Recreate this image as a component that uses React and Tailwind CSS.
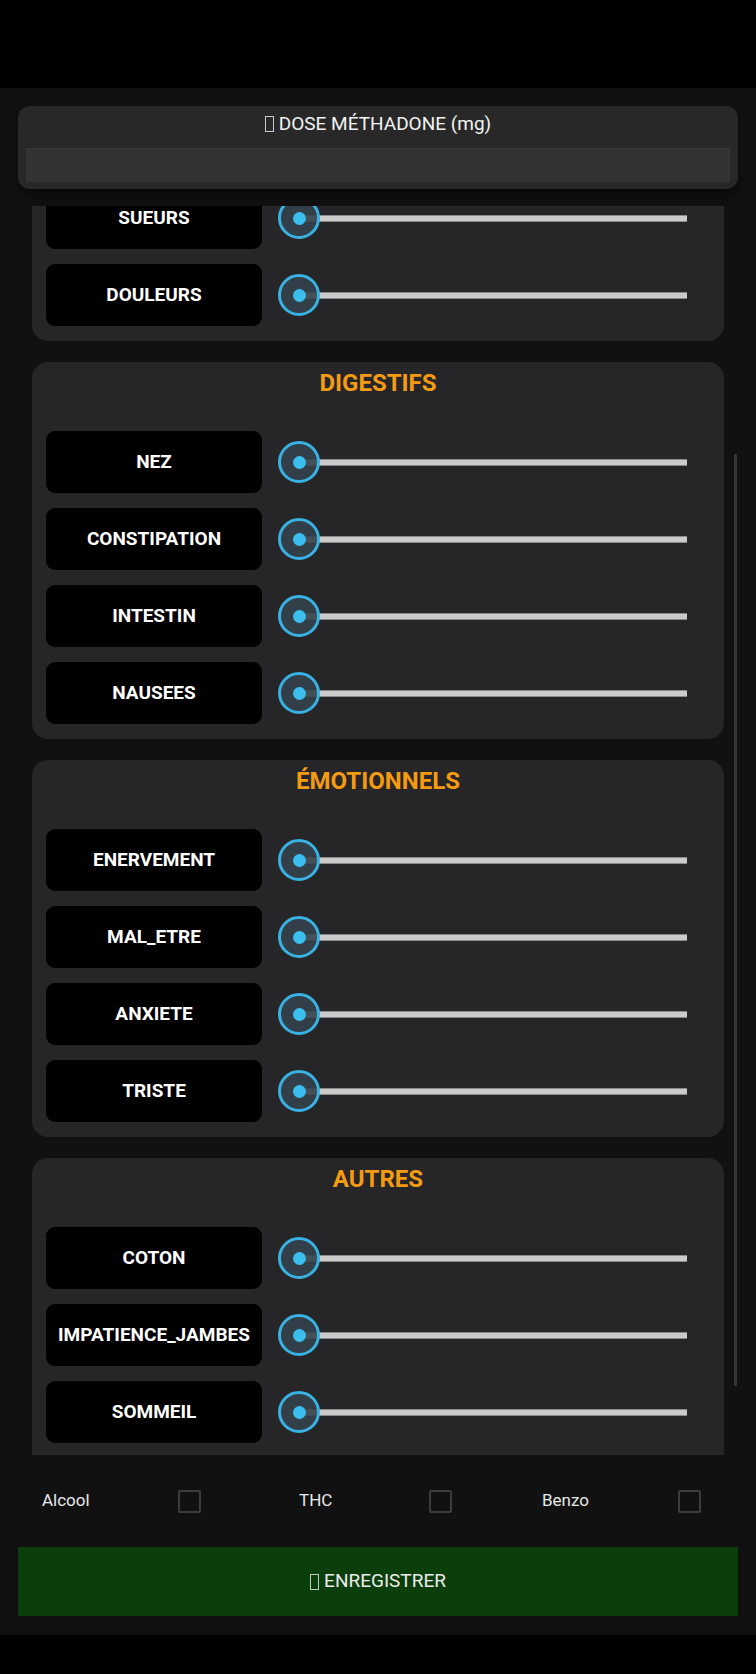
import React from 'react';

// symptom groups (first one is scrolled partly out of view)
const groups = [
  { title: 'PHYSIQUES', items: ['BAILLEMENTS', 'FRISSONS', 'SUEURS', 'DOULEURS'] },
  { title: 'DIGESTIFS', items: ['NEZ', 'CONSTIPATION', 'INTESTIN', 'NAUSEES'] },
  { title: 'ÉMOTIONNELS', items: ['ENERVEMENT', 'MAL_ETRE', 'ANXIETE', 'TRISTE'] },
  { title: 'AUTRES', items: ['COTON', 'IMPATIENCE_JAMBES', 'SOMMEIL'], last: true },
];

const Tofu = () => (
  <span className="inline-block w-[9px] h-[16px] border border-current mr-[5px] align-[-2px] opacity-80"></span>
);

const Slider = () => (
  <div className="relative flex-1 h-[44px] ml-[16px] mr-[23px]">
    <div className="absolute left-[21px] right-0 top-[19px] h-[7px] bg-[#cbcbcb] border-y border-[#8a8a8a]"></div>
    <div className="absolute left-0 top-[1px] w-[42px] h-[42px] rounded-full border-[3px] border-[#38b2e3] bg-[#34434b]/90 flex items-center justify-center">
      <div className="w-[13px] h-[13px] rounded-full bg-[#3bbdee]"></div>
    </div>
  </div>
);

const Row = ({ label }) => (
  <div className="flex items-center h-[62px]">
    <div className="w-[216px] h-[62px] shrink-0 bg-black rounded-[9px] flex items-center justify-center text-white font-bold text-[19px] whitespace-nowrap">
      {label}
    </div>
    <Slider />
  </div>
);

const Group = ({ title, items, last }) => (
  <div className={`bg-[#262628] rounded-[16px] px-[14px] pt-[7px] ${last ? 'pb-[60px]' : 'pb-[15px]'}`}>
    <h3 className="text-center text-[#f59b12] font-bold text-[24px] leading-[28px]">{title}</h3>
    <div className="mt-[34px] flex flex-col gap-[15px]">
      {items.map((it) => (
        <Row key={it} label={it} />
      ))}
    </div>
  </div>
);

const Check = ({ label, width }) => (
  <div className="flex items-center">
    <span className={`${width} text-[#e8e8e8] text-[17px]`}>{label}</span>
    <span className="w-[23px] h-[23px] border-2 border-[#3c3c3c] rounded-[2px]"></span>
  </div>
);

export default function App() {
  return (
    <div className="w-[756px] h-[1674px] bg-black flex flex-col" style={{ fontFamily: 'Roboto, "Liberation Sans", sans-serif' }}>
      <div className="h-[88px] bg-black shrink-0"></div>

      <div className="h-[1547px] bg-[#111112] flex flex-col pt-[18px] shrink-0">
        {/* dose header */}
        <div className="mx-[18px] h-[83px] bg-[#282828] rounded-[12px] px-[8px] pt-[7px] shadow-lg shadow-black/40">
          <div className="text-center text-[#f2f2f2] text-[19px] leading-[22px]">
            <Tofu />DOSE MÉTHADONE (mg)
          </div>
          <div className="mt-[13px] h-[34px] bg-[#333334] border-t border-[#3a3a3a]"></div>
        </div>

        {/* scrolled list */}
        <div className="relative mt-[17px] mx-[18px] h-[1249px] overflow-hidden">
          <div className="-mt-[242px] px-[14px] flex flex-col gap-[21px]">
            {groups.map((g) => (
              <Group key={g.title} title={g.title} items={g.items} last={g.last} />
            ))}
          </div>
          <div className="absolute right-[1px] top-[248px] w-[3px] h-[932px] bg-[#353537] rounded-full"></div>
        </div>

        {/* substances */}
        <div className="h-[92px] flex items-center pl-[42px]">
          <Check label="Alcool" width="w-[136px]" />
          <div className="ml-[98px]">
            <Check label="THC" width="w-[130px]" />
          </div>
          <div className="ml-[90px]">
            <Check label="Benzo" width="w-[136px]" />
          </div>
        </div>

        <button className="mx-[18px] h-[69px] bg-[#0a3f0b] text-[#ececec] text-[19px] flex items-center justify-center">
          <Tofu />ENREGISTRER
        </button>
      </div>

      <div className="flex-1 bg-black"></div>
    </div>
  );
}
